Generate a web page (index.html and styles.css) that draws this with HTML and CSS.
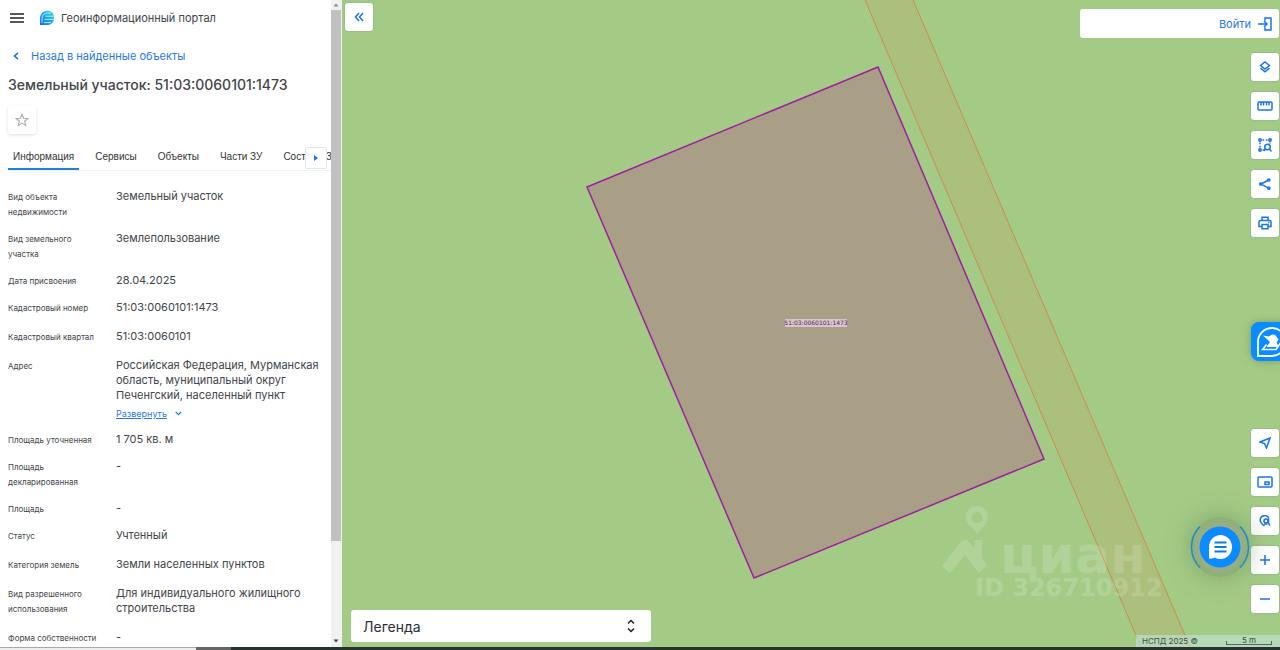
FILE: index.html
```
<!DOCTYPE html>
<html lang="ru">
<head>
  <meta charset="UTF-8" />
  <meta name="viewport" content="width=device-width, initial-scale=1" />
  <title>Геоинформационный портал</title>
  <link rel="stylesheet" href="styles.css">
</head>
<body>

  <div class="app">
    <aside class="sidebar">
      <div class="panel">
        <header class="brand">
          <button class="menu-btn" type="button" aria-label="Меню">
            <svg width="14" height="10" viewBox="0 0 14 10"><path d="M0 1h14M0 5h14M0 9h14" stroke="#222" stroke-width="1.5" /></svg>
          </button>
          <svg class="logo" width="16" height="16" viewBox="0 0 16 16">
            <defs>
              <linearGradient id="logoFill" x1="0" y1="1" x2="1" y2="0">
                <stop offset="0" stop-color="#1769ee" />
                <stop offset="0.5" stop-color="#17a8f2" />
                <stop offset="1" stop-color="#2fe0d2" />
              </linearGradient>
            </defs>
            <path d="M8.500 .8C11.500 .8 14 2.600 14.600 5.200H15V9C14.600 12.500 12 15 8.300 15H1V8C1 4 4.400 .8 8.500 .8Z" fill="url(#logoFill)" />
            <path d="M3 13V8.200C3 5 5.300 3 8.500 3H12M5 12.600H12M6.500 6.200H15M5.500 9.400H15" stroke="#fff" stroke-width=".7" fill="none" />
          </svg>
          <span class="brand-name">Геоинформационный портал</span>
        </header>

        <a class="back" href="#">
          <svg width="6" height="8" viewBox="0 0 6 8"><path d="M5 .8 1.500 4 5 7.200" stroke="#1a73e8" stroke-width="1.600" fill="none" /></svg>
          Назад в найденные объекты
        </a>

        <h1>Земельный участок: 51:03:0060101:1473</h1>

        <button class="fav" type="button" aria-label="В избранное">
          <svg width="14" height="14" viewBox="0 0 14 14"><path d="M7 1.200 8.600 5.200 12.900 5.500 9.600 8.200 10.700 12.400 7 10.100 3.300 12.400 4.400 8.200 1.100 5.500 5.400 5.200Z" stroke="#aaa" stroke-width="1.100" fill="none" /></svg>
        </button>

        <nav class="tabs">
          <a class="tab active" href="#">Информация</a>
          <a class="tab" href="#">Сервисы</a>
          <a class="tab" href="#">Объекты</a>
          <a class="tab" href="#">Части ЗУ</a>
          <a class="tab" href="#">Состав ЕЗП</a>
          <button class="tabs-next" type="button" aria-label="Следующие вкладки">
            <svg width="4" height="6" viewBox="0 0 4 6"><path d="M0 0 4 3 0 6Z" fill="#1a73e8" /></svg>
          </button>
        </nav>

        <dl class="info">
          <div class="row"><dt>Вид объекта недвижимости</dt><dd>Земельный участок</dd></div>
          <div class="row"><dt>Вид земельного участка</dt><dd>Землепользование</dd></div>
          <div class="row"><dt>Дата присвоения</dt><dd>28.04.2025</dd></div>
          <div class="row roomy"><dt>Кадастровый номер</dt><dd>51:03:0060101:1473</dd></div>
          <div class="row roomy"><dt>Кадастровый квартал</dt><dd>51:03:0060101</dd></div>
          <div class="row">
            <dt>Адрес</dt>
            <dd>
              Российская Федерация, Мурманская область, муниципальный округ Печенгский, населенный пункт
              <a class="expand" href="#"><span>Развернуть</span>
                <svg width="7" height="5" viewBox="0 0 7 5"><path d="M.7 .8 3.500 3.600 6.300 .8" stroke="#1a73e8" stroke-width="1.200" fill="none" /></svg>
              </a>
            </dd>
          </div>
          <div class="row"><dt>Площадь уточненная</dt><dd>1 705 кв. м</dd></div>
          <div class="row"><dt>Площадь декларированная</dt><dd>-</dd></div>
          <div class="row"><dt>Площадь</dt><dd>-</dd></div>
          <div class="row roomy"><dt>Статус</dt><dd>Учтенный</dd></div>
          <div class="row roomy"><dt>Категория земель</dt><dd>Земли населенных пунктов</dd></div>
          <div class="row roomy"><dt>Вид разрешенного использования</dt><dd>Для индивидуального жилищного строительства</dd></div>
          <div class="row"><dt>Форма собственности</dt><dd>-</dd></div>
        </dl>
      </div>

      <div class="scrollbar">
        <svg width="6" height="10" viewBox="0 0 6 10"><path d="M.5 6.500 3 3.500 5.500 6.500Z" fill="#8a8a8a" /></svg>
        <div class="track"><div class="thumb"></div></div>
        <svg width="6" height="12" viewBox="0 0 6 12"><path d="M.5 4.500 3 7.500 5.500 4.500Z" fill="#444" /></svg>
      </div>
    </aside>

    <main class="map">
      <svg class="map-canvas" viewBox="0 0 938 647" preserveAspectRatio="xMinYMin slice">
        <path d="M523 0H571L848 647H799Z" fill="#abc07c" />
        <path d="M523 0 799 647M571 0 848 647" stroke="#cf8850" stroke-width="1" fill="none" />
        <path d="M245 187 536 67 702 459 412 578Z" fill="#a99f86" stroke="#a01ea0" stroke-width="1.500" />
        <rect x="443" y="319" width="62" height="8" fill="#d8c6cc" />
        <text class="parcel-label" x="474" y="325">51:03:0060101:1473</text>
        <g class="watermark">
          <path d="M635 506a11 11 0 0 1 11 11c0 7-6 10-11 17-5-7-11-10-11-17a11 11 0 0 1 11-11Zm0 6a5 5 0 1 0 0 11 5 5 0 0 0 0-11Z" />
          <path d="M600 566 619 542Q623 538 627 542L633 548V540H640V558L645 565 637 573 623 555 608 573Z" />
          <text class="wm-name" x="658" y="573">циан</text>
          <text class="wm-id" x="633" y="596">ID 326710912</text>
        </g>
      </svg>

      <div class="overlay">
        <div class="left-tools">
          <button class="tool" type="button" aria-label="Свернуть панель">
            <svg width="10" height="10" viewBox="0 0 10 10"><path d="M5 1 1.500 5 5 9M9 1 5.500 5 9 9" /></svg>
          </button>
          <button class="legend" type="button">
            <span>Легенда</span>
            <svg width="8" height="14" viewBox="0 0 8 14"><path d="M1 4.500 4 1.500 7 4.500M1 9.500 4 12.500 7 9.500" stroke="#222" stroke-width="1.500" fill="none" /></svg>
          </button>
        </div>

        <div class="right-tools">
          <div class="top-tools">
            <div class="login-bar">
              <a class="login" href="#">Войти
                <svg width="16" height="14" viewBox="0 0 16 14"><path d="M8 3.500V1H14V13H8V10.500M1 7H10M7 4 10 7 7 10" /></svg>
              </a>
            </div>

            <div class="tool-group">
              <button class="tool" type="button" aria-label="Слои">
                <svg width="12" height="12" viewBox="0 0 12 12"><path d="M6 1 10.500 4.500 6 8 1.500 4.500ZM1.500 7.200 6 10.800 10.500 7.200" /></svg>
              </button>
              <button class="tool" type="button" aria-label="Измерения">
                <svg width="16" height="10" viewBox="0 0 16 10"><rect x="1" y="1" width="14" height="8" rx="1" /><path d="M4 1V4.500M6.500 1V4.500M9.500 1V4.500M12 1V4.500" /></svg>
              </button>
              <button class="tool" type="button" aria-label="Поиск по области">
                <svg width="14" height="14" viewBox="0 0 14 14"><circle cx="2" cy="2" r="1.200" /><circle cx="12" cy="2" r="1.200" /><circle cx="2" cy="12" r="1.200" /><path d="M4.500 2H6.200M7.800 2H9.500M2 4.500V6.200M2 7.800V9.500M12 4.500V5.500M4.500 12H6M11.300 11 13.500 13.500M6 13Q6.500 11.800 7.800 11.300" /><circle cx="9.500" cy="9" r="2.800" /></svg>
              </button>
              <button class="tool" type="button" aria-label="Поделиться">
                <svg width="12" height="12" viewBox="0 0 12 12"><circle cx="1.800" cy="6" r="1.100" /><circle cx="9.800" cy="2" r="1.100" /><circle cx="9.800" cy="10.200" r="1.100" /><path d="M3 5.500 8.700 2.500M3 6.600 8.700 9.600" /></svg>
              </button>
              <button class="tool" type="button" aria-label="Печать">
                <svg width="14" height="14" viewBox="0 0 14 14"><path d="M4 4.500V1.200H10V4.500M4 10.500H1V6Q1 4.500 2.500 4.500H11.500Q13 4.500 13 6V10.500H10M4 8.500H10V12.800H4Z" /><path d="M10.200 6.500H11.400" /></svg>
              </button>
            </div>
          </div>

          <button class="assist" type="button" aria-label="Помощник">
            <svg width="32" height="32" viewBox="0 0 32 32">
              <path d="M2 30V15A14 14 0 1 1 16 30Z" fill="none" stroke="#fff" stroke-width="1.800" />
              <path d="M7 9.500 13 10.500Q17 7 20 10L22.500 13.500 20.500 16.500 23 21H10.500L14 16Z" fill="#fff" />
              <path d="M10.500 18.500 6.500 23.500H20L25.500 15.500" fill="none" stroke="#fff" stroke-width="1.500" />
            </svg>
          </button>

          <div class="tool-group">
            <button class="tool" type="button" aria-label="Моё местоположение">
              <svg width="12" height="12" viewBox="0 0 12 12"><path d="M11 1 1 5 5.500 6.500 7.500 11Z" /></svg>
            </button>
            <button class="tool" type="button" aria-label="Обзорная карта">
              <svg width="16" height="12" viewBox="0 0 16 12"><rect x="1" y="1" width="14" height="10" rx="1" /><rect x="8" y="6" width="4" height="2.500" /></svg>
            </button>
            <button class="tool" type="button" aria-label="Поиск на карте">
              <svg width="12" height="12" viewBox="0 0 12 12"><path d="M5.500 11Q1.200 8 1.200 5A4.500 4.500 0 0 1 10 3.800" /><circle cx="7" cy="6" r="2" /><path d="M9.500 4V7.500L10.800 10.500M5 9H8.500" /></svg>
            </button>
            <button class="tool" type="button" aria-label="Приблизить">
              <svg width="10" height="10" viewBox="0 0 10 10"><path d="M0 5H10M5 0V10" /></svg>
            </button>
            <button class="tool" type="button" aria-label="Отдалить">
              <svg width="10" height="10" viewBox="0 0 10 10"><path d="M0 5H10" /></svg>
            </button>
          </div>
        </div>
      </div>

      <button class="chat" type="button" aria-label="Чат поддержки">
        <svg width="60" height="60" viewBox="0 0 60 60">
          <circle cx="30" cy="30" r="30" fill="#8fb076" />
          <circle cx="30" cy="30" r="25" fill="#98ad86" />
          <circle cx="30" cy="30" r="20.500" fill="#0a8bff" />
          <path d="M10 9.500A29 29 0 0 0 10 50.500M50 9.500A29 29 0 0 1 50 50.500" fill="none" stroke="#1688e0" stroke-width="1.400" />
          <path d="M19 41.500V30A11.500 12 0 1 1 30.500 42Q27 42 25 40.500 22 42 19 41.500Z" fill="#fff" />
          <path d="M24.500 25.500H36.500M24.500 30H36.500M24.500 34.500H36.500" stroke="#0a7be8" stroke-width="1.800" />
        </svg>
      </button>

      <footer class="attribution">
        <span>НСПД 2025 ©</span>
        <span class="scale">5 m</span>
      </footer>
    </main>
  </div>

  <div class="taskbar"><span class="taskbar-light"></span><span class="taskbar-mid"></span></div>

</body>
</html>
```
FILE: styles.css
```
* {
  margin: 0;
  padding: 0;
  box-sizing: border-box;
}
body {
  height: 100vh;
  display: flex;
  flex-direction: column;
  overflow: hidden;
  background: #fff;
  color: #424549;
  font-family: Inter, "Liberation Sans", sans-serif;
  font-size: 11px;
}
a {
  color: #2a78ea;
  text-decoration: none;
}
button {
  border: none;
  background: #fff;
  font-family: inherit;
  cursor: pointer;
}
svg {
  display: block;
  flex: none;
}
.app {
  flex: 1;
  min-height: 0;
  display: flex;
}

/* Боковая панель */
.sidebar {
  flex: none;
  width: 342px;
  display: flex;
  border-right: 1px solid #eef4ea;
}
.panel {
  flex: 1;
  min-width: 0;
  overflow: hidden;
}
.brand {
  display: flex;
  align-items: center;
  height: 35px;
  padding-left: 10px;
}
.menu-btn {
  display: flex;
}
.logo {
  margin-left: 15px;
}
.brand-name {
  margin-left: 6px;
}
.back {
  display: flex;
  align-items: center;
  gap: 12px;
  height: 16px;
  margin-top: 13px;
  padding-left: 13px;
}
h1 {
  margin-top: 10px;
  padding-left: 8px;
  font-size: 14px;
  font-weight: 500;
  line-height: 22px;
}
.fav {
  display: flex;
  align-items: center;
  justify-content: center;
  width: 28px;
  height: 28px;
  margin: 10px 0 0 8px;
  border-radius: 3px;
  box-shadow: 0 1px 3px rgba(0, 0, 0, 0.14);
}
.tabs {
  position: relative;
  display: flex;
  gap: 11px;
  height: 28px;
  margin: 9px 0 0 8px;
  border-bottom: 1px solid #f0f2f4;
  overflow: hidden;
}
.tab {
  padding: 0 5px;
  color: #333;
  font-family: "Liberation Sans", Arial, sans-serif;
  font-size: 10px;
  line-height: 27px;
  white-space: nowrap;
}
.tab.active {
  border-bottom: 2px solid #1f83d6;
}
.tabs-next {
  position: absolute;
  right: 4px;
  top: 4px;
  display: flex;
  align-items: center;
  justify-content: center;
  width: 22px;
  height: 22px;
  border: 1px solid #dbe7f8;
  border-radius: 2px;
}
.info {
  padding: 18px 8px 0;
}
.row {
  display: grid;
  grid-template-columns: 94px 1fr;
  gap: 14px;
  align-items: baseline;
  padding-bottom: 11px;
}
.row.roomy {
  padding-bottom: 13px;
}
dt {
  font-size: 8px;
  line-height: 15px;
}
dd {
  line-height: 15px;
}
.expand {
  display: flex;
  align-items: center;
  gap: 8px;
  height: 18px;
  padding-top: 3px;
  font-size: 9px;
}
.expand span {
  text-decoration: underline;
}
.scrollbar {
  width: 10px;
  display: flex;
  flex-direction: column;
  align-items: center;
  background: #f1f1f1;
}
.track {
  flex: 1;
  width: 100%;
}
.thumb {
  height: 85%;
  background: #c1c1c1;
}

/* Карта */
.map {
  position: relative;
  flex: 1;
  min-width: 0;
  overflow: hidden;
  background: #a4cb86;
}
.map-canvas {
  position: absolute;
  width: 100%;
  height: 100%;
}
.parcel-label {
  fill: #4a2a55;
  font-family: "DejaVu Sans", sans-serif;
  font-size: 6px;
  text-anchor: middle;
}
.watermark {
  fill: #fff;
  opacity: 0.15;
  font-family: "DejaVu Sans", sans-serif;
  font-weight: bold;
}
.wm-name {
  font-size: 52px;
}
.wm-id {
  font-size: 24px;
}
.overlay {
  position: absolute;
  inset: 0;
  display: flex;
  justify-content: space-between;
}
.left-tools {
  display: flex;
  flex-direction: column;
  justify-content: space-between;
  padding: 3px 0 5px 3px;
}
.tool {
  display: flex;
  align-items: center;
  justify-content: center;
  width: 28px;
  height: 28px;
  border-radius: 3px;
  box-shadow: 0 0 2px rgba(80, 120, 160, 0.5);
}
.tool svg,
.login svg {
  fill: none;
  stroke: #1a73e8;
  stroke-width: 1.5;
}
.legend {
  display: flex;
  align-items: center;
  justify-content: space-between;
  width: 300px;
  height: 32px;
  margin-left: 6px;
  padding: 0 16px 0 12px;
  border-radius: 3px;
  color: #2b2f33;
  font-size: 14px;
}
.right-tools {
  display: flex;
  flex-direction: column;
  align-items: flex-end;
  justify-content: space-between;
  padding: 9px 1px 34px 0;
}
.top-tools {
  display: flex;
  flex-direction: column;
  align-items: flex-end;
  gap: 15px;
}
.login-bar {
  display: flex;
  align-items: center;
  justify-content: flex-end;
  width: 199px;
  height: 29px;
  padding-right: 6px;
  border-radius: 3px;
  background: #fff;
}
.login {
  display: flex;
  align-items: center;
  gap: 6px;
}
.tool-group {
  display: flex;
  flex-direction: column;
  gap: 11px;
}
.assist {
  display: flex;
  align-items: center;
  width: 36px;
  height: 39px;
  margin: 17px -8px 0 0;
  padding-left: 5px;
  border-radius: 8px;
  background: #0a8bff;
  box-shadow: 0 0 8px rgba(60, 90, 60, 0.4);
}
.chat {
  position: absolute;
  right: 30px;
  bottom: 70px;
  border-radius: 50%;
  background: none;
  box-shadow: 0 0 26px rgba(70, 110, 60, 0.4);
}
.attribution {
  position: absolute;
  right: 0;
  bottom: 0;
  display: flex;
  justify-content: space-between;
  width: 144px;
  height: 12px;
  padding: 0 8px 0 6px;
  background: rgba(190, 222, 205, 0.7);
  color: #3f4d4a;
  font-size: 8px;
  line-height: 12px;
}
.scale {
  width: 46px;
  height: 10px;
  border: 1px solid #55645f;
  border-top: none;
  clip-path: polygon(0 60%, 30% 60%, 30% 0, 70% 0, 70% 60%, 100% 60%, 100% 100%, 0 100%);
  line-height: 10px;
  text-align: center;
}

/* Нижняя полоса */
.taskbar {
  flex: none;
  display: flex;
  height: 3px;
  background: #26332f;
}
.taskbar-light {
  width: 196px;
  border-top: 1px solid #aaa;
  background: #eee;
}
.taskbar-mid {
  width: 35px;
  background: #666;
}
```
